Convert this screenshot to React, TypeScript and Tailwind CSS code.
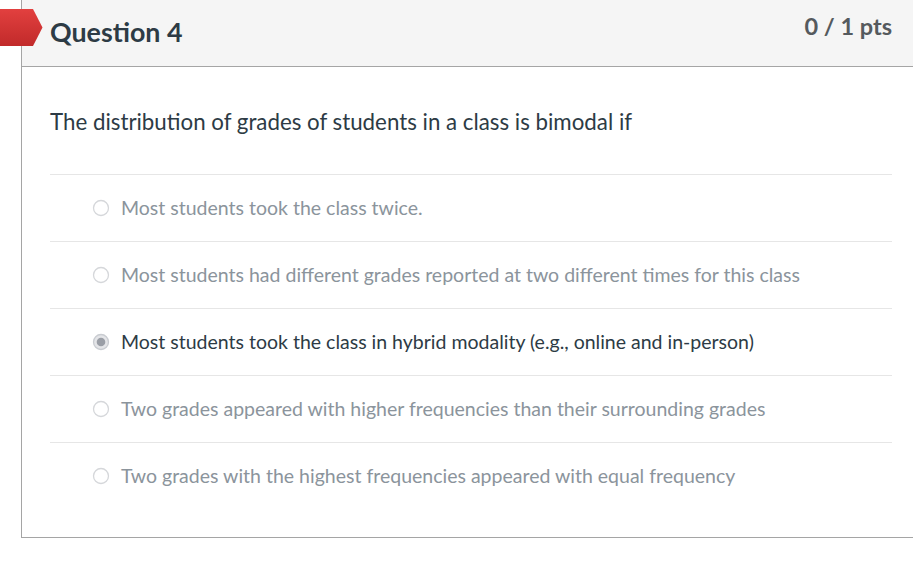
import React from 'react';

const answers = [
  { text: 'Most students took the class twice.', selected: false },
  { text: 'Most students had different grades reported at two different times for this class', selected: false },
  { text: 'Most students took the class in hybrid modality (e.g., online and in-person)', selected: true },
  { text: 'Two grades appeared with higher frequencies than their surrounding grades', selected: false },
  { text: 'Two grades with the highest frequencies appeared with equal frequency', selected: false },
];

const Radio: React.FC<{ checked: boolean }> = ({ checked }) => (
  <svg width="18" height="18" viewBox="0 0 18 18" className="shrink-0">
    <circle cx="9" cy="9" r="7.5" fill={checked ? '#e4e5e8' : '#fff'} stroke={checked ? '#c9ccd1' : '#d5d7da'} strokeWidth="1.3" />
    {checked && <circle cx="9" cy="9" r="4.3" fill="#9a9ea6" />}
  </svg>
);

const App: React.FC = () => {
  return (
    <div className="relative w-[913px] h-[561px] bg-white overflow-hidden font-['Lato','Noto_Sans',sans-serif]">
      {/* Drapeau de question */}
      <svg className="absolute left-0 top-[9px] z-10" width="43" height="37" viewBox="0 0 43 37">
        <defs>
          <linearGradient id="flag" x1="0" y1="0" x2="0" y2="1">
            <stop offset="0" stopColor="#e2403f" />
            <stop offset="1" stopColor="#c12a2a" />
          </linearGradient>
        </defs>
        <polygon points="0,0 33,0 42.5,18.5 33,37 0,37" fill="url(#flag)" />
      </svg>

      <div className="ml-[21px] border-l border-b border-[#a5a5a5] h-[538px]">
        {/* En-tête */}
        <div className="h-[67px] bg-[#f5f5f5] border-b border-[#a5a5a5] flex items-start justify-between pl-[28px] pr-[21px]">
          <h2 className="mt-[14px] text-[26.8px] leading-[36px] font-bold text-[#2d3b45]">Question 4</h2>
          <div className="mt-[10px] text-[23.5px] leading-[32px] font-bold text-[#555a5e]">0 / 1 pts</div>
        </div>

        {/* Corps */}
        <div className="pl-[28px] pr-[21px]">
          <p className="pt-[40px] pb-[37px] text-[22.3px] leading-[30px] text-[#2d3b45]">
            The distribution of grades of students in a class is bimodal if
          </p>
          <div>
            {answers.map((a, i) => (
              <div key={i} className="h-[67px] border-t border-[#e6e6e6] flex items-center pl-[42px] gap-[11px]">
                <Radio checked={a.selected} />
                <span className={`text-[19.5px] ${a.selected ? 'text-[#2d3b45]' : 'text-[#8b949c]'}`}>{a.text}</span>
              </div>
            ))}
          </div>
        </div>
      </div>
    </div>
  );
};

export default App;
